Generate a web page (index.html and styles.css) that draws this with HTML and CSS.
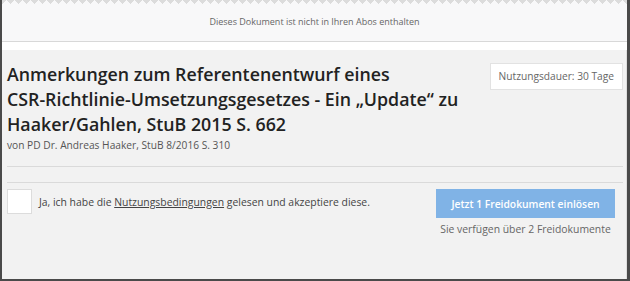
FILE: index.html
```
<!DOCTYPE html>
<html lang="de">
<head>
    <meta charset="UTF-8">
    <meta name="viewport" content="width=device-width, initial-scale=1.0">
    <title>Dokument freischalten</title>
    <link rel="stylesheet" href="styles.css">
</head>
<body>
    <div class="page">
        <div class="tear"></div>
        <div class="notice">Dieses Dokument ist nicht in Ihren Abos enthalten</div>
        <div class="doc">
            <div class="doc-head">
                <div class="doc-title">
                    <h1>Anmerkungen zum Referentenentwurf eines<br>CSR-Richtlinie-Umsetzungsgesetzes - Ein &bdquo;Update&ldquo; zu Haaker/Gahlen, StuB 2015 S. 662</h1>
                    <p class="byline">von PD Dr. Andreas Haaker, StuB 8/2016 S. 310</p>
                </div>
                <div class="duration">Nutzungsdauer: 30 Tage</div>
            </div>
            <hr>
            <hr class="second">
            <div class="redeem">
                <label class="terms">
                    <span class="check"></span>
                    <span>Ja, ich habe die <a href="#">Nutzungsbedingungen</a> gelesen und akzeptiere diese.</span>
                </label>
                <div class="action">
                    <button type="button">Jetzt 1 Freidokument einl&ouml;sen</button>
                    <p>Sie verf&uuml;gen &uuml;ber 2 Freidokumente</p>
                </div>
            </div>
        </div>
    </div>
</body>
</html>
```

FILE: styles.css
```
body {
    margin: 0;
    padding: 0;
    font-family: 'Open Sans', sans-serif;
    background: #ffffff;
}

.page {
    width: 630px;
    height: 281px;
    box-sizing: border-box;
    border-left: 2px solid #4a4a4a;
    border-right: 3px solid #4a4a4a;
    border-bottom: 2px solid #4a4a4a;
    background: #ffffff;
    display: flex;
    flex-direction: column;
}

.tear {
    height: 4px;
    background-color: #f8f8f9;
    background-image:
        linear-gradient(135deg, #dcdcdc 25%, transparent 25%),
        linear-gradient(225deg, #dcdcdc 25%, transparent 25%);
    background-size: 8px 8px;
    background-position: 0 0;
}

.notice {
    height: 37px;
    line-height: 36px;
    background: #f8f8f9;
    border-bottom: 1px solid #d8d8d8;
    text-align: center;
    font-size: 9px;
    color: #666;
    margin-bottom: 8px;
}

.doc {
    flex: 1;
    background: #f2f2f2;
    padding: 12px 3px 0 5px;
    border-right: 1px solid #dedede;
}

.doc-head {
    display: flex;
    justify-content: space-between;
    align-items: flex-start;
}

.doc-title {
    flex: 1;
}

h1 {
    margin: 0;
    font-size: 17.8px;
    line-height: 25px;
    font-weight: 600;
    color: #222;
    max-width: 460px;
}

.byline {
    margin: 1px 0 0;
    font-size: 10.2px;
    line-height: 14px;
    color: #555;
}

.duration {
    margin-top: 1px;
    padding: 0 8px;
    height: 25px;
    line-height: 25px;
    background: #fff;
    border: 1px solid #e2e2e2;
    font-size: 10.2px;
    color: #666;
}

hr {
    margin: 14px 0 0;
    border: 0;
    border-top: 1px solid #dadada;
}

hr.second {
    margin-top: 15px;
}

.redeem {
    display: flex;
    justify-content: space-between;
    align-items: flex-start;
    margin-top: 6px;
    padding-right: 8px;
}

.terms {
    display: flex;
    align-items: center;
    gap: 7px;
    font-size: 10.4px;
    color: #444;
}

.check {
    width: 23px;
    height: 23px;
    background: #fff;
    border: 1px solid #dcdcdc;
}

.terms a {
    color: #444;
    text-decoration: underline;
}

.action {
    width: 179px;
    text-align: center;
}

.action button {
    width: 100%;
    height: 29px;
    border: 0;
    background: #80b3e6;
    color: #fff;
    font-family: 'Open Sans', sans-serif;
    font-size: 10.3px;
    font-weight: 600;
}

.action p {
    margin: 4px 0 0;
    font-size: 10.4px;
    line-height: 14px;
    color: #666;
}
```
